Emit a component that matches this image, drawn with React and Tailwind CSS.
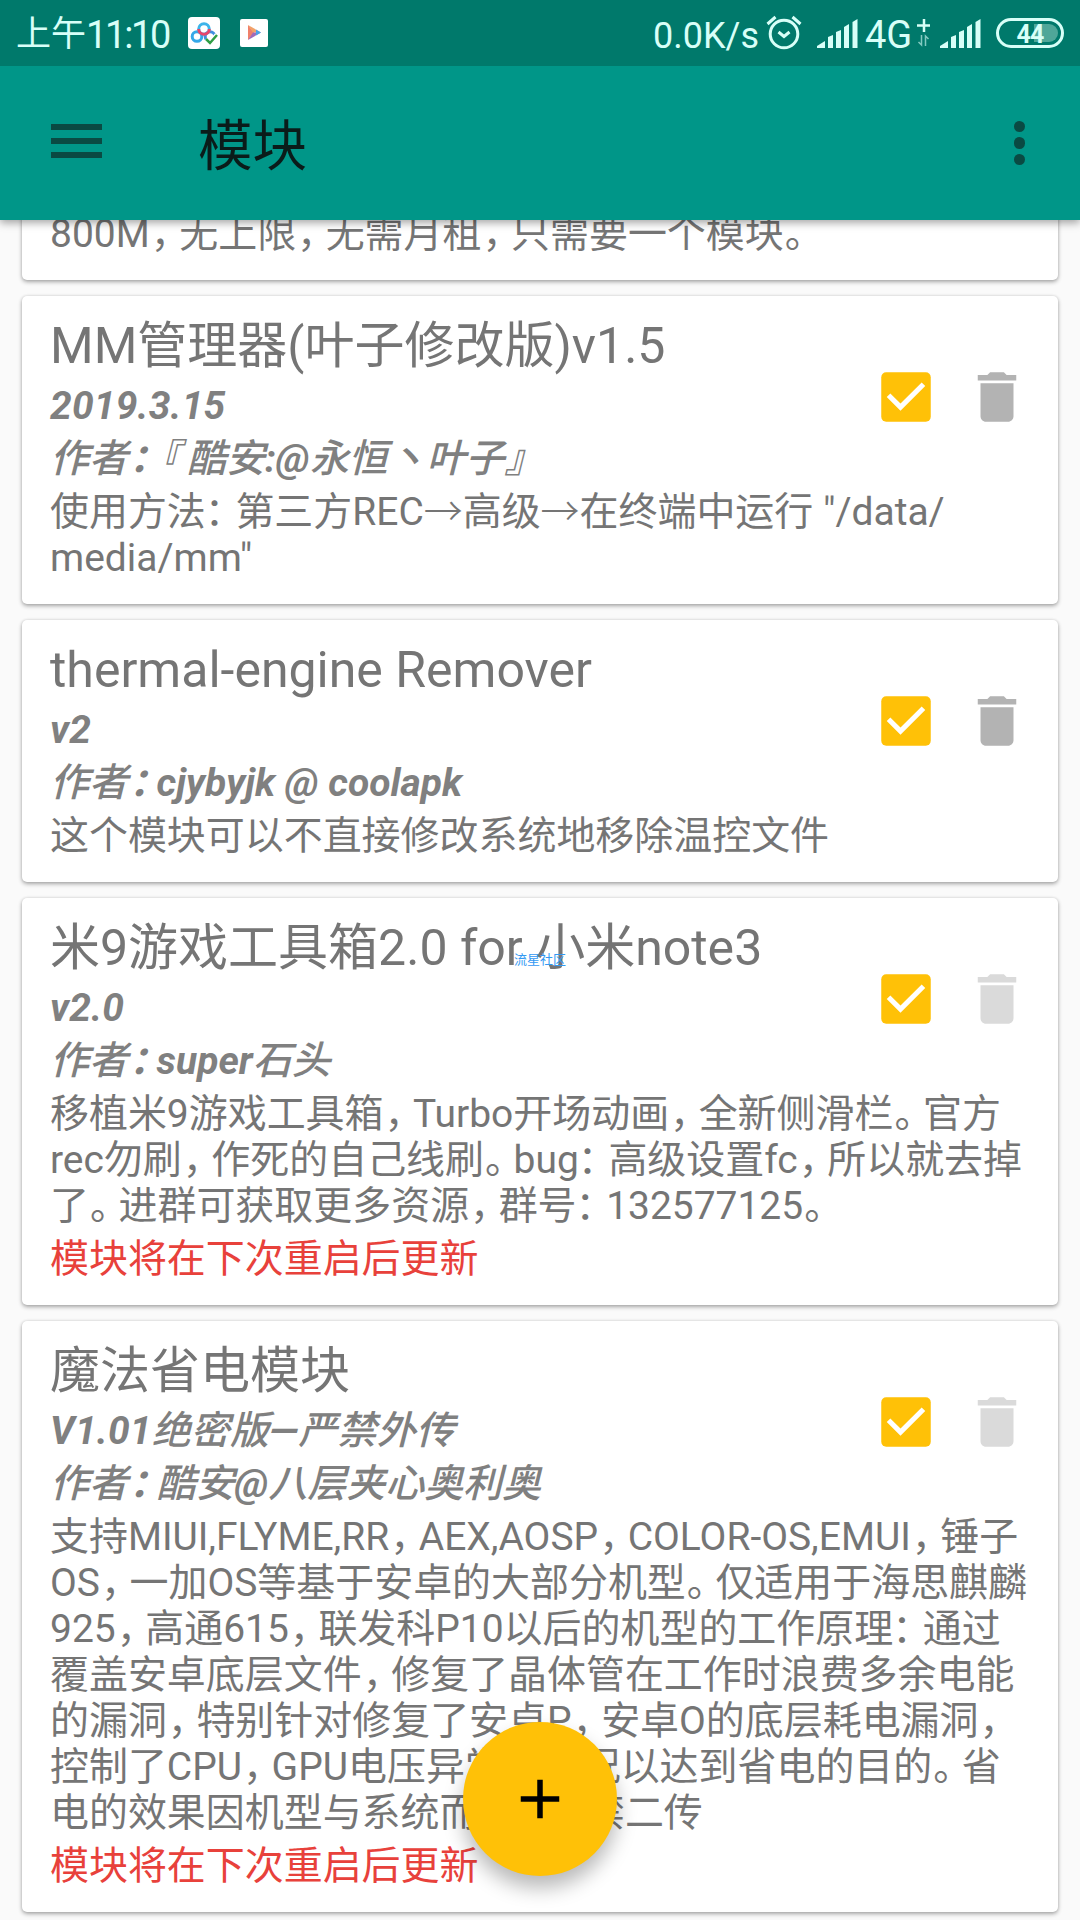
const modules = [
  {
    id: 1,
    title: "MM管理器(叶子修改版)v1.5",
    version: "2019.3.15",
    author: "作者：『酷安:@永恒丶叶子』",
    lines: [
      '使用方法：第三方REC→高级→在终端中运行 "/data/',
      'media/mm"',
    ],
  },
  {
    id: 2,
    title: "thermal-engine Remover",
    version: "v2",
    author: "作者：cjybyjk @ coolapk",
    lines: ["这个模块可以不直接修改系统地移除温控文件"],
  },
  {
    id: 3,
    title: "米9游戏工具箱2.0 for 小米note3",
    version: "v2.0",
    author: "作者：super石头",
    lines: [
      "移植米9游戏工具箱，Turbo开场动画，全新侧滑栏。官方",
      "rec勿刷，作死的自己线刷。bug：高级设置fc，所以就去掉",
      "了。进群可获取更多资源，群号：132577125。",
    ],
    updated: true,
  },
  {
    id: 4,
    title: "魔法省电模块",
    version: "V1.01绝密版—严禁外传",
    author: "作者：酷安@八层夹心奥利奥",
    lines: [
      "支持MIUI,FLYME,RR，AEX,AOSP，COLOR-OS,EMUI，锤子",
      "OS，一加OS等基于安卓的大部分机型。仅适用于海思麒麟",
      "925，高通615，联发科P10以后的机型的工作原理：通过",
      "覆盖安卓底层文件，修复了晶体管在工作时浪费多余电能",
      "的漏洞，特别针对修复了安卓P，安卓O的底层耗电漏洞，",
      "控制了CPU，GPU电压异常的情况以达到省电的目的。省",
      "电的效果因机型与系统而异，严禁二传",
    ],
    updated: true,
  },
];

// Full-width punctuation takes a narrower advance than the ideographs
const punctuation = {
  "，": "tracking-[-9.400px] ml-[1px] -mr-[1px]",
  "。": "tracking-[-9.400px] ml-[1px] -mr-[1px]",
  "：": "tracking-[-9.400px] -ml-[1px] mr-[1px]",
  "→": "font-light",
};

const Text = ({ children }) =>
  children.split(/([，。：→])/).map((part, i) => (
    <span key={i} className={punctuation[part]}>
      {part}
    </span>
  ));

// Bold line: the ideographs are one step lighter than the Latin letters
const boldPunctuation = {
  "：": "tracking-[-9.300px] ml-[1px] -mr-[2px]",
  "『": "ml-[4px] mr-[7px] font-medium",
};

const BoldText = ({ children }) =>
  children.split(/([：『]|[\u4e00-\u9fff丶』]+)/).map((part, i) => (
    <span
      key={i}
      className={boldPunctuation[part] || (/[\u4e00-\u9fff』]/.test(part) ? "font-medium" : "")}
    >
      {part}
    </span>
  ));

const Signal = () => (
  <svg width="41" height="29" viewBox="0 0 41 29" fill="currentColor">
    <path d="M0 29v-2l8-5v7z" />
    <path d="M11 18l5-2v13h-5z" />
    <path d="M19 13l5-2v18h-5z" />
    <path d="M27 8l5-3v24h-5z" />
    <path d="M35.500 3l5-3v29h-5z" />
  </svg>
);

const StatusBar = () => (
  <div className="flex items-center h-[66px] bg-[#00796b] text-[#d8fff8] whitespace-nowrap">
    <span className="ml-[16px] mt-[4px] text-[35px]">上午</span>
    <span className="w-[100px] mt-[5px] text-[38px] tracking-[-2.300px]">11:10</span>
    <svg className="ml-[2px]" width="32" height="32" viewBox="0 0 32 32">
      <rect width="32" height="32" rx="4" fill="#fff" />
      <g fill="none" strokeWidth="3">
        <circle cx="9" cy="19.500" r="4.800" stroke="#35a8e8" />
        <circle cx="22" cy="19.500" r="4.800" stroke="#3f8fe0" />
        <circle cx="16" cy="12" r="5.300" stroke="#3db4ea" />
        <path d="M10.700 12a5.300 5.300 0 0 0 10.600 0" stroke="#e8456c" />
        <path d="M18 22l4 4 7-8" stroke="#fff" strokeWidth="5" />
        <path d="M18 22l4 4 7-8" stroke="#2f9e44" strokeWidth="2.500" />
      </g>
    </svg>
    <svg className="ml-[20px]" width="28" height="28" viewBox="0 0 28 28">
      <rect width="28" height="28" rx="2" fill="#fff" />
      <path d="M8 6v15l6-7.500z" fill="#f0806a" />
      <path d="M8 6l13 7.500h-8z" fill="#f2a268" />
      <path d="M8 21l13-7.500h-8z" fill="#a06ab8" />
      <path d="M16 10.600l5 2.900-5 3z" fill="#4aa3e8" />
    </svg>

    <div className="flex items-center ml-auto mr-[16px]">
      <span className="w-[108px] mt-[5px] text-[36px]">0.0K/s</span>
      <svg className="ml-[5px]" width="36" height="36" viewBox="0 0 36 36" fill="none" stroke="currentColor" strokeWidth="3">
        <circle cx="18" cy="19" r="13.800" />
        <path d="M12.500 17l5.500 4.500 5.500-4.500" />
        <path d="M1.500 9l8-7M34.500 9l-8-7" />
      </svg>
      <span className="flex ml-[15px]"><Signal /></span>
      <span className="ml-[7px] w-[50px] mt-[5px] text-[38px]">4G</span>
      <svg className="ml-[2px]" width="14" height="30" viewBox="0 0 14 30" fill="none" stroke="currentColor">
        <path d="M7 1v13M0 7.500h13" strokeWidth="2.500" />
        <path d="M4.500 17v10l-3-3M8.500 28V18l3 3" strokeWidth="1.500" opacity=".6" />
      </svg>
      <span className="flex ml-[9px]"><Signal /></span>
      <div className="relative flex items-center justify-center ml-[15px] w-[68px] h-[30px] rounded-full border-3 border-[#d8fff8]">
        <span className="absolute right-[3px] top-[3px] w-[24px] h-[18px] rounded-r-full bg-[#4fa799]" />
        <span className="relative mt-[2px] text-[25px] leading-none font-bold tracking-[-0.800px]">44</span>
      </div>
    </div>
  </div>
);

const Toolbar = () => (
  <header className="relative z-10 bg-[#009688] shadow-[0_3px_8px_rgba(0,0,0,0.35)]">
    <StatusBar />
    <div className="flex items-center h-[154px] pl-[51px] pr-[55px] text-[#0a4a43]">
      <div className="flex flex-col gap-[8px] -mt-[4px]">
        <span className="w-[51px] h-[6px] bg-current" />
        <span className="w-[51px] h-[6px] bg-current" />
        <span className="w-[51px] h-[6px] bg-current" />
      </div>
      <h1 className="ml-[96px] mt-[6px] text-[54.500px] leading-[64px] text-[#0a1c1a]">模块</h1>
      <div className="flex flex-col gap-[5px] ml-auto">
        <span className="size-[11.500px] rounded-full bg-current" />
        <span className="size-[11.500px] rounded-full bg-current" />
        <span className="size-[11.500px] rounded-full bg-current" />
      </div>
    </div>
  </header>
);

const ModuleCard = ({ module }) => (
  <section className="shrink-0 bg-white rounded-[5px] pt-[21px] pb-[23px] pl-[28px] shadow-[0_2px_4px_rgba(0,0,0,0.32),0_0_3px_rgba(0,0,0,0.12)]">
    <div className="flex items-start h-[165px] pr-[28px]">
      <div className="flex-1 min-w-0">
        <h2 className="text-[50px] leading-[58px]">{module.title}</h2>
        <p className="mt-[8px] font-bold italic tracking-[0.200px] text-[#808080]">
          <BoldText>{module.version}</BoldText>
        </p>
        <p className="mt-[7px] font-bold italic text-[#808080]">
          <BoldText>{module.author}</BoldText>
        </p>
      </div>
      <svg className="mt-[47px] shrink-0" width="66" height="66" viewBox="0 0 24 24">
        <rect x="3" y="3" width="18" height="18" rx="1.800" fill="#ffc107" />
        <path d="M10 17l-5-5 1.300-1.300 3.700 3.700 7.700-7.700L19 8z" fill="#fff" />
      </svg>
      <svg
        className={module.updated ? "mt-[47px] ml-[25px] shrink-0 text-[#dadada]" : "mt-[47px] ml-[25px] shrink-0 text-[#b3b3b3]"}
        width="66"
        height="66"
        viewBox="0 0 24 24"
        fill="currentColor"
      >
        <path d="M6 19c0 1.100.9 2 2 2h8c1.100 0 2-.9 2-2V7H6v12zM19 4h-3.500l-1-1h-5l-1 1H5v2h14V4z" />
      </svg>
    </div>
    <div className="mt-[7px]">
      {module.lines.map((line) => (
        <p key={line}>
          <Text>{line}</Text>
        </p>
      ))}
    </div>
    {module.updated && (
      <p className="mt-[7px] text-[#e8413b]">模块将在下次重启后更新</p>
    )}
  </section>
);

export default function App() {
  return (
    <div className="relative flex flex-col w-[1080px] h-[1920px] overflow-hidden bg-[#fafafa] text-[#757575] font-['Roboto','Noto_Sans_CJK_SC',sans-serif]">
      <Toolbar />
      <main className="flex flex-col gap-[16px] px-[22px] text-[38.960px] leading-[46px] whitespace-nowrap">
        <section className="shrink-0 -mt-[9px] pb-[23px] pl-[28px] bg-white rounded-[5px] shadow-[0_2px_4px_rgba(0,0,0,0.32),0_0_3px_rgba(0,0,0,0.12)]">
          <p>
            <Text>800M，无上限，无需月租，只需要一个模块。</Text>
          </p>
        </section>
        {modules.map((module) => (
          <ModuleCard key={module.id} module={module} />
        ))}
      </main>

      {/* Community watermark */}
      <span className="absolute left-[514px] top-[952px] text-[13px] leading-[16px] text-[#3399f3]">
        流星社区
      </span>

      <button
        type="button"
        className="absolute left-[463px] top-[1722px] size-[154px] flex items-center justify-center rounded-full bg-[#ffc107] shadow-[0_12px_20px_rgba(0,0,0,0.28)]"
      >
        <svg width="66" height="66" viewBox="0 0 24 24">
          <path d="M19 13h-6v6h-2v-6H5v-2h6V5h2v6h6v2z" />
        </svg>
      </button>
    </div>
  );
}
